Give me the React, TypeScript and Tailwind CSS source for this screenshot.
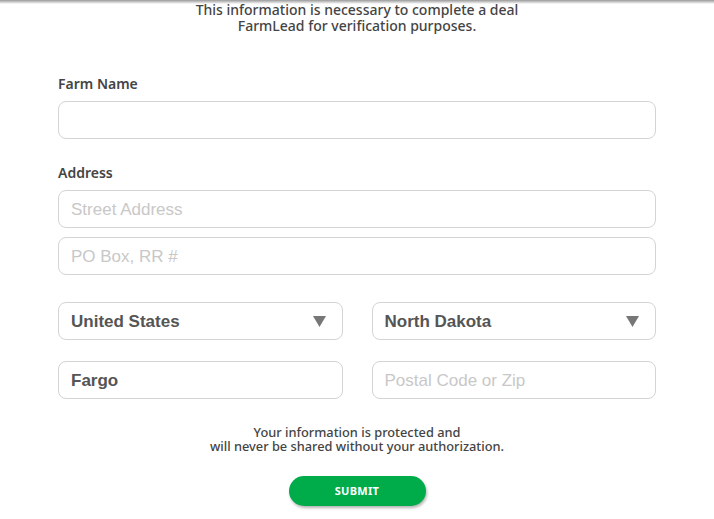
import React from "react";

const inputBase =
  "h-[38px] w-full rounded-[8px] border border-[#d4d4d4] bg-white px-[12px] pt-[1px] text-[17px] outline-none placeholder:text-[#c8c8c8] text-[#555] font-bold";

function Select({ value }: { value: string }) {
  return (
    <div className="relative flex h-[38px] w-full items-center rounded-[8px] border border-[#d4d4d4] bg-white px-[12px] pt-[1px]">
      <span className="text-[17px] font-bold text-[#555]" style={{ fontFamily: '"Liberation Sans", Arial, sans-serif' }}>
        {value}
      </span>
      <svg className="absolute right-[16px] top-[13px]" width="13" height="11" viewBox="0 0 13 11">
        <polygon points="0,0 13,0 6.5,11" fill="#777" />
      </svg>
    </div>
  );
}

export default function App() {
  const ui = { fontFamily: '"Noto Sans", "Open Sans", sans-serif' };
  const arial = { fontFamily: '"Liberation Sans", Arial, sans-serif' };
  return (
    <div className="relative h-[519px] w-[714px] overflow-hidden bg-white" style={ui}>
      <div className="pointer-events-none absolute left-0 right-0 top-0 h-[4px] bg-gradient-to-b from-[#9a9a9a] to-white" />
      <div className="pt-[2px] text-center text-[14px] font-medium leading-[16px] text-[#444]">
        <div>This information is necessary to complete a deal</div>
        <div>FarmLead for verification purposes.</div>
      </div>

      <div className="mx-[58px] mt-[41px]">
        <div className="text-[14px] font-semibold leading-[18px] text-[#444]">Farm Name</div>
        <input className={inputBase + " mt-[8px]"} style={arial} />

        <div className="mt-[25px] text-[14px] font-semibold leading-[18px] text-[#444]">Address</div>
        <input className={inputBase + " mt-[8px] font-normal"} style={arial} placeholder="Street Address" />
        <input className={inputBase + " mt-[9px] font-normal"} style={arial} placeholder="PO Box, RR #" />

        <div className="mt-[27px] grid grid-cols-2 gap-x-[29px]">
          <Select value="United States" />
          <Select value="North Dakota" />
        </div>
        <div className="mt-[21px] grid grid-cols-2 gap-x-[29px]">
          <input className={inputBase} style={arial} defaultValue="Fargo" />
          <input className={inputBase + " font-normal"} style={arial} placeholder="Postal Code or Zip" />
        </div>

        <div className="mt-[26px] text-center text-[12.8px] font-medium leading-[14px] text-[#444]">
          <div>Your information is protected and</div>
          <div>will never be shared without your authorization.</div>
        </div>

        <div className="mt-[23px] flex justify-center">
          <button className="h-[30px] w-[137px] rounded-full bg-[#00ac4a] text-[11px] font-bold tracking-[0.3px] text-white shadow-[1px_2px_3px_rgba(0,0,0,0.3)]">
            SUBMIT
          </button>
        </div>
      </div>
    </div>
  );
}
